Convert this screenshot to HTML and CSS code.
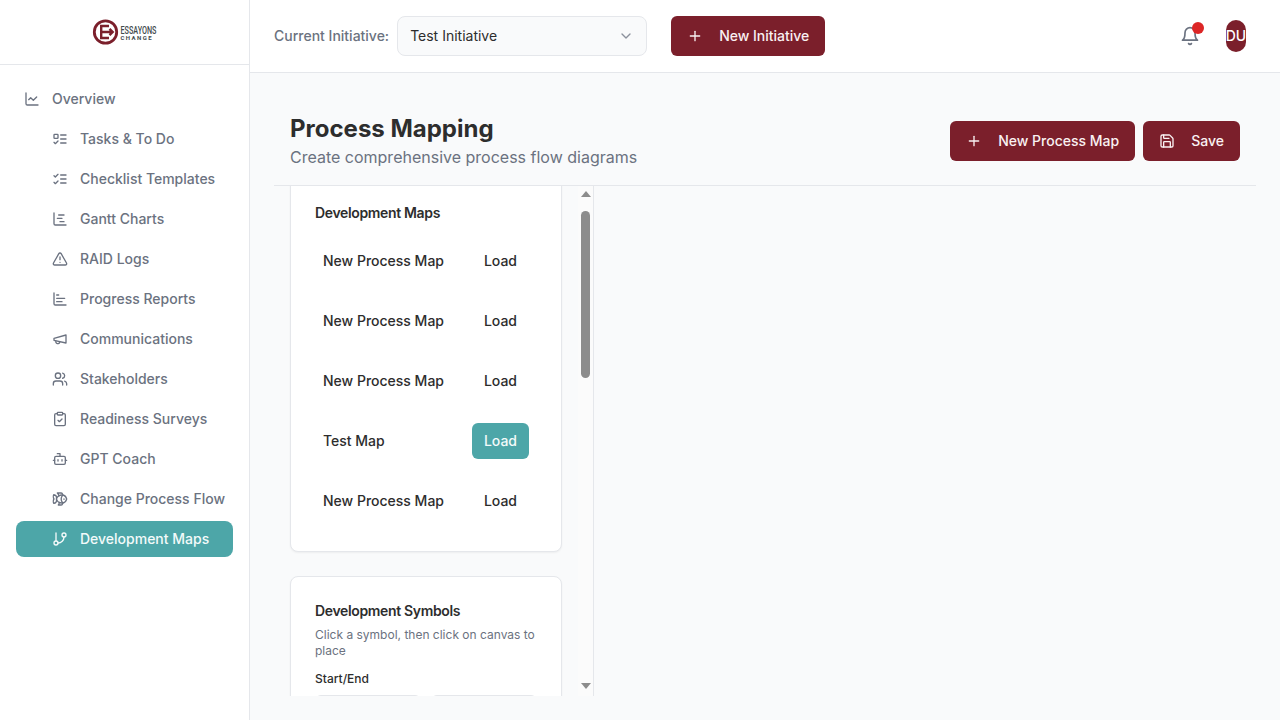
FILE: index.html
```html
<!DOCTYPE html>
<html lang="en">
<head>
  <meta charset="UTF-8">
  <meta name="viewport" content="width=device-width, initial-scale=1.0">
  <title>Process Mapping</title>
  <link rel="stylesheet" href="styles.css">
</head>
<body>
  <div class="app">
    <!-- Sidebar -->
    <aside class="sidebar">
      <div class="logo">
        <svg width="70" height="30" viewBox="0 0 70 30">
          <circle cx="14.5" cy="14" r="11.2" fill="none" stroke="#7b1f2b" stroke-width="2.8"/>
          <path d="M18 8H10.2v12H18M10.2 14H21.5M18.5 10.8l3.2 3.2-3.2 3.2" fill="none" stroke="#7b1f2b" stroke-width="2.4"/>
          <text x="29.5" y="15.5" class="logo-top" textLength="36" lengthAdjust="spacingAndGlyphs">ESSAYONS</text>
          <text x="29.5" y="22" class="logo-bottom" textLength="31">CHANGE</text>
        </svg>
      </div>
      <nav class="nav">
        <a class="nav-item top-item">
          <svg class="icon" viewBox="0 0 24 24"><path d="M3 3v16a2 2 0 0 0 2 2h16"/><path d="m19 9-5 5-4-4-3 3"/></svg>
          Overview
        </a>
        <a class="nav-item">
          <svg class="icon" viewBox="0 0 24 24"><rect x="3" y="5" width="6" height="6" rx="1"/><path d="m3 17 2 2 4-4"/><path d="M13 6h8"/><path d="M13 12h8"/><path d="M13 18h8"/></svg>
          Tasks &amp; To Do
        </a>
        <a class="nav-item">
          <svg class="icon" viewBox="0 0 24 24"><path d="m3 17 2 2 4-4"/><path d="m3 7 2 2 4-4"/><path d="M13 6h8"/><path d="M13 12h8"/><path d="M13 18h8"/></svg>
          Checklist Templates
        </a>
        <a class="nav-item">
          <svg class="icon" viewBox="0 0 24 24"><path d="M10 6h8"/><path d="M12 16h6"/><path d="M3 3v16a2 2 0 0 0 2 2h16"/><path d="M8 11h7"/></svg>
          Gantt Charts
        </a>
        <a class="nav-item">
          <svg class="icon" viewBox="0 0 24 24"><path d="m21.73 18-8-14a2 2 0 0 0-3.48 0l-8 14A2 2 0 0 0 4 21h16a2 2 0 0 0 1.73-3"/><path d="M12 9v4"/><path d="M12 17h.01"/></svg>
          RAID Logs
        </a>
        <a class="nav-item">
          <svg class="icon" viewBox="0 0 24 24"><path d="M3 3v16a2 2 0 0 0 2 2h16"/><path d="M7 16h8"/><path d="M7 11h12"/><path d="M7 6h3"/></svg>
          Progress Reports
        </a>
        <a class="nav-item">
          <svg class="icon" viewBox="0 0 24 24"><path d="m3 11 18-5v12L3 14v-3z"/><path d="M11.6 16.8a3 3 0 1 1-5.8-1.6"/></svg>
          Communications
        </a>
        <a class="nav-item">
          <svg class="icon" viewBox="0 0 24 24"><path d="M16 21v-2a4 4 0 0 0-4-4H6a4 4 0 0 0-4 4v2"/><circle cx="9" cy="7" r="4"/><path d="M22 21v-2a4 4 0 0 0-3-3.87"/><path d="M16 3.13a4 4 0 0 1 0 7.75"/></svg>
          Stakeholders
        </a>
        <a class="nav-item">
          <svg class="icon" viewBox="0 0 24 24"><rect x="8" y="2" width="8" height="4" rx="1"/><path d="M16 4h2a2 2 0 0 1 2 2v14a2 2 0 0 1-2 2H6a2 2 0 0 1-2-2V6a2 2 0 0 1 2-2h2"/><path d="m9 14 2 2 4-4"/></svg>
          Readiness Surveys
        </a>
        <a class="nav-item">
          <svg class="icon" viewBox="0 0 24 24"><path d="M12 8V4H8"/><rect x="4" y="8" width="16" height="12" rx="2"/><path d="M2 14h2"/><path d="M20 14h2"/><path d="M15 13v2"/><path d="M9 13v2"/></svg>
          GPT Coach
        </a>
        <a class="nav-item">
          <svg class="icon" viewBox="0 0 24 24"><path d="M6.5 12c.94-3.46 4.94-6 8.5-6 3.56 0 6.06 2.54 7 6-.94 3.47-3.44 6-7 6s-7.56-2.53-8.5-6Z"/><path d="M18 12v.5"/><path d="M16 17.93a9.77 9.77 0 0 1 0-11.86"/><path d="M7 10.67C7 8 5.58 5.97 2.73 5.5c-1 1.5-1 5 .23 6.5-1.24 1.5-1.24 5-.23 6.5C5.58 18.03 7 16 7 13.33"/><path d="M10.46 7.26C10.2 5.88 9.17 4.24 8 3h5.8a2 2 0 0 1 1.98 1.67l.23 1.4"/><path d="m16.01 17.93-.23 1.4A2 2 0 0 1 13.8 21H9.5a5.96 5.96 0 0 0 1.49-3.98"/></svg>
          Change Process Flow
        </a>
        <a class="nav-item active">
          <svg class="icon" viewBox="0 0 24 24"><line x1="6" y1="3" x2="6" y2="15"/><circle cx="18" cy="6" r="3"/><circle cx="6" cy="18" r="3"/><path d="M18 9a9 9 0 0 1-9 9"/></svg>
          Development Maps
        </a>
      </nav>
    </aside>

    <div class="main">
      <!-- Top bar -->
      <header class="topbar">
        <span class="initiative-label">Current Initiative:</span>
        <div class="select">
          Test Initiative
          <svg class="icon chevron" viewBox="0 0 24 24"><path d="m6 9 6 6 6-6"/></svg>
        </div>
        <button class="btn new-initiative">
          <svg class="icon" viewBox="0 0 24 24"><path d="M5 12h14"/><path d="M12 5v14"/></svg>
          New Initiative
        </button>
        <div class="topbar-right">
          <div class="bell">
            <svg class="icon bell-icon" viewBox="0 0 24 24"><path d="M6 8a6 6 0 0 1 12 0c0 7 3 9 3 9H3s3-2 3-9"/><path d="M10.3 21a1.94 1.94 0 0 0 3.4 0"/></svg>
            <span class="dot"></span>
          </div>
          <div class="avatar">DU</div>
        </div>
      </header>

      <main class="content">
        <div class="page-head">
          <div>
            <h1>Process Mapping</h1>
            <p>Create comprehensive process flow diagrams</p>
          </div>
          <div class="page-actions">
            <button class="btn">
              <svg class="icon" viewBox="0 0 24 24"><path d="M5 12h14"/><path d="M12 5v14"/></svg>
              New Process Map
            </button>
            <button class="btn">
              <svg class="icon" viewBox="0 0 24 24"><path d="M15.2 3a2 2 0 0 1 1.4.6l3.8 3.8a2 2 0 0 1 .6 1.4V19a2 2 0 0 1-2 2H5a2 2 0 0 1-2-2V5a2 2 0 0 1 2-2z"/><path d="M17 21v-7a1 1 0 0 0-1-1H8a1 1 0 0 0-1 1v7"/><path d="M7 3v4a1 1 0 0 0 1 1h7"/></svg>
              Save
            </button>
          </div>
        </div>

        <div class="workspace">
          <div class="panel">
            <div class="tools">
              <section class="card maps-card">
                <h3>Development Maps</h3>
                <div class="map-list">
                  <div class="map-row"><span>New Process Map</span><button class="load">Load</button></div>
                  <div class="map-row"><span>New Process Map</span><button class="load">Load</button></div>
                  <div class="map-row"><span>New Process Map</span><button class="load">Load</button></div>
                  <div class="map-row"><span>Test Map</span><button class="load selected">Load</button></div>
                  <div class="map-row"><span>New Process Map</span><button class="load">Load</button></div>
                </div>
              </section>

              <section class="card">
                <h3>Development Symbols</h3>
                <p class="hint">Click a symbol, then click on canvas to place</p>
                <h4>Start/End</h4>
                <div class="symbols">
                  <div class="symbol"></div>
                  <div class="symbol"></div>
                </div>
              </section>
            </div>
            <div class="scrollbar">
              <span class="arrow-up"></span>
              <span class="thumb"></span>
              <span class="arrow-down"></span>
            </div>
          </div>
          <div class="canvas"></div>
        </div>
      </main>
    </div>
  </div>
</body>
</html>
```

FILE: styles.css
```css
* {
  box-sizing: border-box;
}

body {
  margin: 0;
  font-family: Inter, "Liberation Sans", sans-serif;
  font-size: 14px;
  line-height: 20px;
  background-color: #f9fafb;
  color: #2d2d2d;
}

.app {
  display: flex;
  height: 720px;
  overflow: hidden;
}

.icon {
  width: 16px;
  height: 16px;
  flex: none;
  fill: none;
  stroke: currentColor;
  stroke-width: 2;
  stroke-linecap: round;
  stroke-linejoin: round;
}

/* Sidebar */
.sidebar {
  width: 250px;
  flex: none;
  background-color: white;
  border-right: 1px solid #e5e7eb;
}

.logo {
  height: 65px;
  display: flex;
  align-items: center;
  justify-content: center;
  padding: 2px 0 0 2px;
  border-bottom: 1px solid #e5e7eb;
}

.logo svg {
  overflow: visible;
}

.logo-top {
  font-family: Roboto, sans-serif;
  font-size: 11px;
  font-weight: 500;
  fill: #3f4a4d;
}

.logo-bottom {
  font-family: Roboto, sans-serif;
  font-size: 6px;
  font-weight: 700;
  fill: #3f4a4d;
}

.nav {
  display: flex;
  flex-direction: column;
  gap: 4px;
  padding: 16px;
}

.nav-item {
  height: 36px;
  display: flex;
  align-items: center;
  gap: 12px;
  padding-left: 36px;
  border-radius: 8px;
  color: #6b7280;
  font-weight: 500;
}

.nav-item.top-item {
  padding-left: 8px;
}

.nav-item.active {
  background-color: #4da6a8;
  color: #f3fafa;
}

/* Top bar */
.main {
  flex: 1;
  min-width: 0;
  display: flex;
  flex-direction: column;
}

.topbar {
  height: 73px;
  flex: none;
  display: flex;
  align-items: center;
  padding: 0 24px;
  background-color: white;
  border-bottom: 1px solid #e5e7eb;
}

.initiative-label {
  color: #6b7280;
  font-weight: 500;
  margin-right: 8px;
}

.select {
  width: 250px;
  height: 40px;
  display: flex;
  align-items: center;
  justify-content: space-between;
  padding: 0 12px;
  background-color: #f9fafb;
  border: 1px solid #e5e7eb;
  border-radius: 8px;
}

.chevron {
  color: #8b919c;
}

.btn {
  height: 40px;
  display: inline-flex;
  align-items: center;
  gap: 16px;
  padding: 0 16px;
  background-color: #7b1f2b;
  color: #f9f1f2;
  border: none;
  border-radius: 6px;
  font-family: inherit;
  font-size: 14px;
  line-height: 20px;
  font-weight: 500;
}

.new-initiative {
  margin-left: 24px;
}

.topbar-right {
  margin-left: auto;
  margin-right: 10px;
  display: flex;
  align-items: center;
  gap: 26px;
}

.bell {
  position: relative;
  width: 20px;
  height: 20px;
}

.bell-icon {
  width: 20px;
  height: 20px;
  color: #6b7280;
}

.dot {
  position: absolute;
  top: -4px;
  right: -4px;
  width: 12px;
  height: 12px;
  border-radius: 50%;
  background-color: #dc2626;
}

.avatar {
  width: 20px;
  height: 32px;
  display: flex;
  align-items: center;
  justify-content: center;
  border-radius: 10px;
  background-color: #7b1f2b;
  color: white;
  font-weight: 500;
  white-space: nowrap;
}

/* Page */
.content {
  flex: 1;
  min-height: 0;
  display: flex;
  flex-direction: column;
  padding: 24px;
}

.page-head {
  height: 89px;
  flex: none;
  display: flex;
  justify-content: space-between;
  align-items: center;
  padding: 0 16px;
  border-bottom: 1px solid #e5e7eb;
}

.page-head h1 {
  margin: 0;
  font-size: 24px;
  line-height: 32px;
  font-weight: 700;
}

.page-head p {
  margin: 0;
  font-size: 16px;
  line-height: 24px;
  color: #6b7280;
}

.page-actions {
  display: flex;
  gap: 8px;
}

.workspace {
  flex: 1;
  min-height: 0;
  display: flex;
}

.panel {
  width: 320px;
  flex: none;
  display: flex;
  border-right: 1px solid #e5e7eb;
}

.tools {
  flex: 1;
  min-width: 0;
  padding: 0 16px;
  overflow: hidden;
}

/* Panel is shown scrolled, so the first card starts above the fold */
.maps-card {
  margin-top: -8px;
}

.scrollbar {
  width: 15px;
  flex: none;
  display: flex;
  flex-direction: column;
  align-items: center;
  padding: 5px 0 7px;
  background-color: #fbfbfb;
}

.thumb {
  width: 9px;
  height: 167px;
  margin-top: 14px;
  border-radius: 5px;
  background-color: #8c8c8c;
}

.arrow-up {
  width: 0;
  height: 0;
  border-left: 5px solid transparent;
  border-right: 5px solid transparent;
  border-bottom: 6px solid #8c8c8c;
}

.arrow-down {
  width: 0;
  height: 0;
  margin-top: auto;
  border-left: 5px solid transparent;
  border-right: 5px solid transparent;
  border-top: 6px solid #8c8c8c;
}

.canvas {
  flex: 1;
}

.card {
  background-color: white;
  border: 1px solid #e5e7eb;
  border-radius: 8px;
  padding: 24px;
  margin-bottom: 24px;
  box-shadow: 0 1px 2px rgba(0, 0, 0, 0.05);
}

.card h3 {
  margin: 0;
  font-size: 14px;
  line-height: 20px;
  font-weight: 600;
  letter-spacing: -0.025em;
}

.map-list {
  display: flex;
  flex-direction: column;
  gap: 8px;
  margin-top: 12px;
}

.map-row {
  display: flex;
  align-items: center;
  justify-content: space-between;
  padding: 8px;
  font-weight: 500;
}

.load {
  height: 36px;
  padding: 0 12px;
  background: none;
  border: none;
  border-radius: 6px;
  font-family: inherit;
  font-size: 14px;
  line-height: 20px;
  font-weight: 500;
  color: #2d2d2d;
}

.load.selected {
  background-color: #4da6a8;
  color: #f3fafa;
}

.hint {
  margin: 6px 0 12px;
  font-size: 12px;
  line-height: 16px;
  color: #6b7280;
}

.card h4 {
  margin: 0 0 8px;
  font-size: 12px;
  line-height: 16px;
  font-weight: 500;
}

.symbols {
  display: grid;
  grid-template-columns: 1fr 1fr;
  gap: 10px;
  margin-bottom: 16px;
}

.symbol {
  height: 90px;
  border: 1px solid #e5e7eb;
  border-radius: 6px;
}
```
